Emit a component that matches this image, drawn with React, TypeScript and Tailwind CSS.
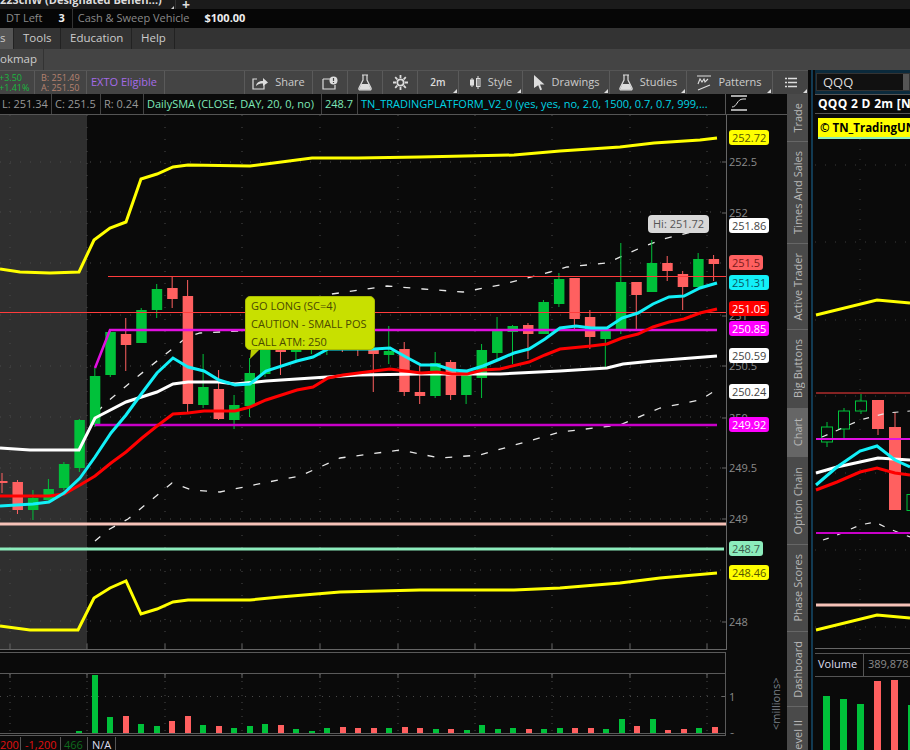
import React from 'react'

type Candle = [number, number, number, number, 'g' | 'r']

// [bodyTop, bodyBottom, wickTop, wickBottom, colour], index gives x
const candles: Candle[] = [
  [481, 483, 473, 493, 'r'], [482, 510, 480, 514, 'r'], [498, 510, 490, 520, 'g'], [489, 500, 479, 502, 'g'],
  [464, 488, 462, 490, 'g'], [420, 468, 419, 472, 'g'], [376, 425, 368, 427, 'g'], [332, 375, 330, 377, 'g'],
  [334, 345, 318, 371, 'r'], [310, 343, 308, 343, 'g'], [289, 310, 284, 318, 'g'], [288, 299, 277, 308, 'r'],
  [296, 404, 280, 412, 'r'], [387, 405, 354, 408, 'g'], [389, 419, 370, 420, 'r'], [405, 420, 395, 429, 'g'],
  [373, 406, 358, 417, 'g'], [348, 374, 345, 377, 'g'], [340, 352, 335, 375, 'r'], [340, 352, 335, 360, 'g'],
  [340, 350, 330, 354, 'g'], [340, 350, 335, 355, 'g'], [340, 350, 335, 352, 'r'], [340, 350, 335, 356, 'r'],
  [348, 354, 340, 392, 'r'], [351, 355, 326, 364, 'g'], [349, 392, 342, 396, 'r'], [392, 396, 364, 404, 'r'],
  [363, 396, 352, 398, 'g'], [362, 395, 360, 400, 'r'], [375, 395, 375, 404, 'g'], [350, 378, 344, 398, 'g'],
  [331, 353, 317, 359, 'g'], [326, 332, 325, 364, 'g'], [325, 334, 323, 359, 'r'], [302, 334, 300, 334, 'g'],
  [279, 304, 273, 307, 'g'], [278, 319, 278, 329, 'r'], [317, 337, 310, 349, 'r'], [330, 339, 330, 367, 'g'],
  [282, 330, 243, 334, 'g'], [282, 295, 282, 330, 'r'], [263, 292, 240, 292, 'g'], [263, 271, 256, 281, 'r'],
  [274, 287, 271, 310, 'r'], [259, 287, 253, 287, 'g'], [259, 264, 255, 281, 'r'],
]

const candleX = (i: number) => 2 + i * 15.47

const yellowTop = '0,269 20,272 50,273 79,272 94,240 110,228 126,222 141,179 157,174 173,167 188,165 250,166 266,164 312,158 358,158 420,157 514,155 560,151 620,147 654,143 700,140 717,138'
const yellowBottom = '0,626 30,630 78,630 94,598 110,588 126,581 141,614 157,609 173,602 188,600 250,600 280,597 340,592 420,590 514,590 560,588 620,583 660,578 717,573'
const white = '0,448 30,450 79,450 95,418 126,402 157,392 173,384 188,382 219,382 235,384 266,381 312,378 358,375 420,374 500,374 560,371 607,368 623,364 653,361 717,356'
const cyan = '0,506 33,504 49,502 64,493 80,478 95,457 111,433 126,415 142,393 157,373 173,358 188,367 204,371 219,380 235,385 250,384 266,371 297,361 313,357 328,349 374,349 390,348 406,357 421,365 437,365 452,370 467,371 483,366 500,359 514,353 529,349 545,339 560,328 576,326 591,328 607,328 622,318 638,313 653,304 669,297 684,296 700,288 717,283'
const red = '0,496 49,496 64,494 80,485 95,476 111,463 126,452 142,438 157,426 173,414 188,413 204,411 235,411 250,407 266,400 297,390 313,387 328,378 343,375 374,371 390,369 421,373 437,372 452,374 467,374 483,370 500,369 529,362 545,355 560,349 591,346 607,344 622,338 638,334 653,327 669,322 684,319 700,313 717,309'
const dashUpper = '97,412 107,402 137,377 187,337 200,333 240,331 332,294 387,286 423,289 463,292 500,285 550,272 567,267 607,263 640,248 663,239 717,226'
const dashLower = '95,541 108,530 128,519 172,483 192,490 220,492 263,483 300,476 340,458 400,450 440,458 480,455 560,432 620,425 660,408 700,400 713,392'

const gridX = [10, 87, 165, 242, 320, 398, 475, 552, 630, 707]
const gridY = [162, 212, 263, 315, 366, 417, 468, 519, 570, 621]
const axisLabels: [string, number][] = [['252.5', 162], ['252', 213], ['251', 316], ['250.5', 366], ['250', 418], ['249.5', 468], ['249', 519], ['248', 622]]

const volumes: [number, number, 'g' | 'r'][] = [
  [79, 731, 'g'], [95, 675, 'g'], [110, 717, 'g'], [126, 716, 'r'], [141, 724, 'g'], [157, 726, 'g'], [172, 721, 'r'],
  [188, 716, 'r'], [203, 725, 'g'], [219, 726, 'r'], [234, 728, 'g'], [250, 726, 'g'], [265, 724, 'g'], [281, 725, 'r'],
  [296, 729, 'g'], [312, 731, 'g'], [327, 728, 'g'], [343, 727, 'r'], [358, 728, 'r'], [374, 728, 'r'], [389, 728, 'g'],
  [405, 727, 'r'], [420, 728, 'r'], [436, 729, 'g'], [451, 729, 'r'], [467, 730, 'g'], [482, 725, 'g'], [498, 729, 'g'],
  [513, 728, 'g'], [529, 729, 'r'], [544, 729, 'g'], [560, 728, 'g'], [575, 728, 'r'], [591, 728, 'r'], [606, 729, 'g'],
  [622, 719, 'g'], [637, 726, 'r'], [653, 719, 'g'], [668, 730, 'r'], [684, 729, 'r'], [699, 728, 'g'], [715, 727, 'r'],
]

const GREEN = '#00c13a'
const RED = '#ff6060'

const Corner = () => (
  <span className="absolute right-px bottom-px w-0 h-0 border-l-[4px] border-l-transparent border-b-[4px] border-b-[#ddd]" />
)

const FlaskIcon = () => (
  <svg width="14" height="17" viewBox="0 0 14 17" fill="none">
    <path d="M4 1h6M5 1v5L1 14c-.5 1 .2 2 1 2h10c.8 0 1.5-1 1-2L9 6V1" stroke="#ddd" strokeWidth="1.2" />
    <path d="M3.4 10h7.2l2 4.5c.2.7-.2 1.3-.8 1.3H2.2c-.6 0-1-.6-.8-1.3z" fill="#ddd" />
  </svg>
)

const ToolCell = ({ w, corner, children }: { w: string; corner?: boolean; children: React.ReactNode }) => (
  <div className={`${w} relative h-full shrink-0 flex items-center justify-center gap-[7px] border-r border-[#5a5a5a] text-[#ccc]`}>
    {children}
    {corner && <Corner />}
  </div>
)

const Toolbar = () => (
  <div className="h-[24px] flex items-stretch bg-[#444] border-t border-[#555] text-[11px]">
    <div className="w-[35px] shrink-0 border-r border-[#5a5a5a] flex flex-col justify-center text-[9px] leading-[10px] text-[#19b83f] overflow-hidden">
      <span className="-ml-[1px]">+3.50</span>
      <span className="-ml-[1px]">+1.41%</span>
    </div>
    <div className="w-[52px] shrink-0 border-r border-[#5a5a5a] flex flex-col justify-center pl-[6px] text-[9px] leading-[10px] text-[#b5826f]">
      <span>B: 251.49</span>
      <span>A: 251.50</span>
    </div>
    <div className="w-[78px] shrink-0 border-r border-[#5a5a5a] pl-[4px] flex items-center text-[#a46be8] whitespace-nowrap">EXTO Eligible</div>
    <div className="w-[80px] shrink-0 border-r border-[#5a5a5a]" />
    <ToolCell w="w-[68px]">
      <svg width="16" height="14" viewBox="0 0 16 14" fill="none">
        <path d="M5 3H1v10h11V8" stroke="#ddd" strokeWidth="1.2" />
        <path d="M4 10c.5-3.5 3-5 7-5V2l5 4.5L11 10V7.5c-3 0-5 .5-7 2.5z" fill="#ddd" />
      </svg>
      <span>Share</span>
    </ToolCell>
    <ToolCell w="w-[35px]">
      <svg width="16" height="14" viewBox="0 0 16 14" fill="none">
        <path d="M1 3h8M1 3v10h12V9" stroke="#ddd" strokeWidth="1.2" />
        <circle cx="11.5" cy="4.5" r="4" fill="#ddd" />
        <path d="M11.5 2v3M11.5 6v1" stroke="#444" strokeWidth="1.2" />
      </svg>
    </ToolCell>
    <ToolCell w="w-[35px]"><FlaskIcon /></ToolCell>
    <ToolCell w="w-[35px]">
      <svg width="15" height="15" viewBox="0 0 15 15" fill="none">
        <circle cx="7.5" cy="7.5" r="3.2" stroke="#ddd" strokeWidth="1.8" />
        <path d="M7.5 0v3M7.5 12v3M0 7.5h3M12 7.5h3M2.2 2.2l2.1 2.1M10.7 10.7l2.1 2.1M12.8 2.2l-2.1 2.1M4.3 10.7l-2.1 2.1" stroke="#ddd" strokeWidth="1.8" />
      </svg>
    </ToolCell>
    <ToolCell w="w-[41px]" corner><span className="font-semibold text-[10px] text-[#ddd]">2m</span></ToolCell>
    <ToolCell w="w-[64px]" corner>
      <svg width="12" height="15" viewBox="0 0 12 15" fill="none">
        <path d="M3 3v9M9 1v13" stroke="#ddd" strokeWidth="1" />
        <rect x="1" y="4.5" width="4" height="6" fill="#ddd" />
        <rect x="7.5" y="3.5" width="3.5" height="8" stroke="#ddd" />
      </svg>
      <span>Style</span>
    </ToolCell>
    <ToolCell w="w-[87px]" corner>
      <svg width="12" height="16" viewBox="0 0 12 16"><path d="M1 0l10.5 9.5H7l2 5-1.8.8-2-5L1 13z" fill="#ddd" /></svg>
      <span>Drawings</span>
    </ToolCell>
    <ToolCell w="w-[77px]" corner><FlaskIcon /><span>Studies</span></ToolCell>
    <ToolCell w="w-[86px]" corner>
      <svg width="14" height="16" viewBox="0 0 14 16" fill="none">
        <path d="M0 1h14M1 15l12-5M1 9l2-5 2 3 2-3 1 3 3-3" stroke="#ddd" strokeWidth="1.1" />
      </svg>
      <span>Patterns</span>
    </ToolCell>
    <div className="relative flex-1 flex items-center justify-center">
      <svg width="12" height="11" viewBox="0 0 12 11" fill="none">
        <path d="M3 1.5h9M3 5.5h9M3 9.5h9M0 1.5h2M0 5.5h2M0 9.5h2" stroke="#ddd" strokeWidth="1.5" />
      </svg>
      <Corner />
    </div>
  </div>
)

const StudyRow = () => (
  <div className="h-[21px] flex bg-[#0a0a0a] border-b border-[#555] text-[11px] leading-[20px] whitespace-nowrap">
    <div className="w-[726px] shrink-0 flex overflow-hidden border-r border-[#555]">
      <span className="w-[52px] pl-[2px] text-[#999] border-r border-[#444]">L: 251.34</span>
      <span className="w-[49px] pl-[3px] text-[#999] border-r border-[#444]">C: 251.5</span>
      <span className="w-[43px] pl-[3px] text-[#999] border-r border-[#444]">R: 0.24</span>
      <span className="w-[178px] pl-[3px] text-[#7ee8b8] border-r border-[#444]">DailySMA (CLOSE, DAY, 20, 0, no)</span>
      <span className="w-[36px] pl-[3px] text-[#7ee8b8] border-r border-[#444]">248.7</span>
      <span className="pl-[3px] text-[#00d4e4]">TN_TRADINGPLATFORM_V2_0 (yes, yes, no, 2.0, 1500, 0.7, 0.7, 999,...</span>
    </div>
    <div className="flex-1 pl-[5px] pt-[1px]">
      <svg width="16" height="16" viewBox="0 0 16 16" fill="none">
        <path d="M0 1h16M0 15h16" stroke="#ddd" strokeWidth="1.3" />
        <path d="M1 12c5 0 5-8 11-8h3" stroke="#ddd" strokeWidth="1" />
      </svg>
    </div>
  </div>
)

const tagBase = 'absolute left-[729px] h-[15px] rounded-[3px] px-[3px] text-[11px] leading-[15px] whitespace-nowrap'

const MainChart = () => (
  <div className="relative h-[535px] overflow-hidden bg-[#0a0a0a]">
    <svg className="absolute inset-0 block" width="787" height="535" viewBox="0 115 787 535" fontFamily="Open Sans, sans-serif">
      <rect x="0" y="115" width="87" height="534" fill="#2f2f2f" />
      {gridX.map(x => <line key={x} x1={x} x2={x} y1="115" y2="649" stroke="#4a4a4a" strokeDasharray="1 11" />)}
      {gridY.map(y => <line key={y} x1="0" x2="726" y1={y} y2={y} stroke="#4a4a4a" strokeDasharray="1 9" />)}
      {gridX.map(x => <line key={x} x1={x} x2={x} y1="644" y2="649" stroke="#666" />)}
      <line x1="0" x2="726" y1="524" y2="524" stroke="#f6c2b8" strokeWidth="3" />
      <line x1="0" x2="724" y1="549" y2="549" stroke="#8cecbc" strokeWidth="3" />
      <polyline points={yellowTop} fill="none" stroke="#ffff00" strokeWidth="3" />
      <polyline points={yellowBottom} fill="none" stroke="#ffff00" strokeWidth="3" />
      <polyline points={dashUpper} fill="none" stroke="#e8e8e8" strokeWidth="1.3" strokeDasharray="7 11" />
      <polyline points={dashLower} fill="none" stroke="#e8e8e8" strokeWidth="1.3" strokeDasharray="7 11" />
      {candles.map(([top, bottom, wickTop, wickBottom, c], i) => {
        const x = candleX(i)
        const fill = c === 'g' ? GREEN : RED
        return (
          <g key={i}>
            <line x1={x} x2={x} y1={wickTop} y2={wickBottom} stroke={fill} strokeWidth="1" />
            <rect x={x - 5} y={top} width="10.5" height={bottom - top} fill={fill} />
          </g>
        )
      })}
      <line x1="108" x2="726" y1="276.5" y2="276.5" stroke="#ff3c3c" />
      <line x1="0" x2="726" y1="312.5" y2="312.5" stroke="#ff3c3c" />
      <polyline points="95,368 110,330 717,330" fill="none" stroke="#e010e0" strokeWidth="2.5" />
      <line x1="95" x2="717" y1="425" y2="425" stroke="#c800c8" strokeWidth="2.5" />
      <polyline points={white} fill="none" stroke="#ffffff" strokeWidth="3" />
      <polyline points={red} fill="none" stroke="#ff0000" strokeWidth="3" />
      <polyline points={cyan} fill="none" stroke="#12f0f8" strokeWidth="3" />
      <line x1="726.5" x2="726.5" y1="115" y2="650" stroke="#666" />
      <line x1="0" x2="726" y1="649.5" y2="649.5" stroke="#666" />
      {axisLabels.map(([t, y]) => (
        <g key={t}>
          <line x1="722" x2="726" y1={y} y2={y} stroke="#666" />
          <text x="729" y={y + 4} fontSize="11" fill="#8a8a8a">{t}</text>
        </g>
      ))}
      <path d="M251 350h8l-9 9z" fill="#b8cc00" />
    </svg>

    <div className="absolute left-[245px] top-[181px] w-[130px] h-[54px] rounded-[5px] bg-[#c8e000] border border-[#a9bc00] pl-[5px] text-[11px] leading-[18px] text-[#4a4a00] whitespace-nowrap">
      <div>GO LONG (SC=4)</div>
      <div>CAUTION - SMALL POS</div>
      <div>CALL ATM: 250</div>
    </div>

    <div className="absolute left-[648px] top-[100px] w-[61px] h-[18px] rounded-[4px] bg-[#d8d8d8] text-center text-[11px] leading-[18px] text-[#555] whitespace-nowrap">Hi: 251.72</div>

    <div className={`${tagBase} top-[15px] bg-[#ffff00] text-[#555500]`}>252.72</div>
    <div className={`${tagBase} top-[103px] bg-white text-[#444]`}>251.86</div>
    <div className={`${tagBase} top-[140px] bg-[#ff6060] text-[#7a1a1a]`}>251.5</div>
    <div className={`${tagBase} top-[160px] bg-[#12f0f8] text-[#0a5560]`}>251.31</div>
    <div className={`${tagBase} top-[186px] bg-[#ff0000] text-white`}>251.05</div>
    <div className={`${tagBase} top-[206px] bg-[#ff00ff] text-white`}>250.85</div>
    <div className={`${tagBase} top-[233px] bg-white text-[#444]`}>250.59</div>
    <div className={`${tagBase} top-[269px] bg-white text-[#444]`}>250.24</div>
    <div className={`${tagBase} top-[302px] bg-[#ff00ff] text-white`}>249.92</div>
    <div className={`${tagBase} top-[426px] bg-[#8cecbc] text-[#3a5a4a]`}>248.7</div>
    <div className={`${tagBase} top-[450px] bg-[#ffff00] text-[#555500]`}>248.46</div>
  </div>
)

const VolumePanel = () => (
  <svg className="block" width="787" height="87" viewBox="0 650 787 87" fontFamily="Open Sans, sans-serif">
    <rect x="0" y="650" width="787" height="87" fill="#0a0a0a" />
    {gridX.map(x => <line key={x} x1={x} x2={x} y1="674" y2="733" stroke="#4a4a4a" strokeDasharray="1 6" />)}
    {gridX.map(x => <line key={x} x1={x} x2={x} y1="674" y2="678" stroke="#666" />)}
    <line x1="0" x2="726" y1="696.5" y2="696.5" stroke="#4a4a4a" strokeDasharray="1 6" />
    {volumes.map(([x, top, c]) => (
      <rect key={x} x={x - 3} y={top} width="6" height={733 - top} fill={c === 'g' ? GREEN : RED} />
    ))}
    <line x1="722" x2="726" y1="696.5" y2="696.5" stroke="#666" />
    <text x="729" y="701" fontSize="11" fill="#8a8a8a">1</text>
    <text x="729" y="741" fontSize="11" fill="#8a8a8a">0</text>
    <rect x="0" y="734" width="787" height="3" fill="#0a0a0a" />
    <path d="M0 652.5H726M0 673.5H726M0 733.5H726M0 735.5H726M725.5 652V736" stroke="#5a5a5a" fill="none" />
    <text transform="translate(780 730) rotate(-90)" fontSize="11" fill="#7a8088">{'<millions>'}</text>
  </svg>
)

const BottomRow = () => (
  <div className="h-[13px] flex bg-[#0a0a0a] text-[11px] leading-[15px] overflow-hidden whitespace-nowrap">
    <span className="w-[21px] text-[#e01010] border-r border-[#555] overflow-hidden text-right pr-[5px]">200</span>
    <span className="w-[40px] pl-[4px] text-[#e01010] border-r border-[#555]">-1,200</span>
    <span className="w-[27px] pl-[3px] text-[#0f6a1e] border-r border-[#555]">466</span>
    <span className="w-[28px] pl-[4px] text-[#dde] border-r border-[#555]">N/A</span>
  </div>
)

const sideTabs: [string, string, boolean][] = [
  ['Trade', 'h-[48px]', false],
  ['Times And Sales', 'h-[102px]', false],
  ['Active Trader', 'h-[86px]', false],
  ['Big Buttons', 'h-[79px]', false],
  ['Chart', 'h-[48px]', true],
  ['Option Chain', 'h-[88px]', false],
  ['Phase Scores', 'h-[87px]', false],
  ['Dashboard', 'h-[75px]', false],
  ['Level II', 'h-[62px]', false],
]

const SideTabs = () => (
  <div className="w-[21px] shrink-0 flex flex-col overflow-hidden bg-[#0a0a0a]">
    {sideTabs.map(([label, h, active]) => (
      <div
        key={label}
        className={`${h} shrink-0 flex items-center justify-center border-b border-[#666] text-[11px] leading-none text-[#b8b8b8] ${active ? 'bg-[#666]' : 'bg-[#4a4a4a]'}`}
      >
        <span className="[writing-mode:vertical-rl] rotate-180 whitespace-nowrap">{label}</span>
      </div>
    ))}
  </div>
)

const HollowCandle = ({ x, y, h, top, bottom }: { x: number; y: number; h: number; top: number; bottom: number }) => (
  <g stroke={GREEN} fill="none">
    <line x1={x} x2={x} y1={top} y2={y} />
    <line x1={x} x2={x} y1={y + h} y2={bottom} />
    <rect x={x - 5.5} y={y} width="11" height={h} />
  </g>
)

const RightPanel = () => (
  <div className="flex-1 min-w-0 flex flex-col overflow-hidden">
    <div className="h-[24px] shrink-0 bg-[#0b2a3c] py-[3px] pl-[1px]">
      <div className="h-[18px] bg-[#111] border border-[#333] pl-[6px] text-[13px] leading-[16px] text-[#ddd] flex justify-between">
        <span>QQQ</span>
        <span className="w-[6px] bg-[#555]" />
      </div>
    </div>
    <div className="h-[20px] shrink-0 bg-[#0a0a0a] border-y border-[#555] pl-[3px] text-[12px] tracking-[0.3px] leading-[18px] font-bold text-white whitespace-nowrap overflow-hidden">QQQ 2 D 2m [NA</div>
    <div className="h-[25px] shrink-0 bg-[#0a0a0a] pt-[4px] pl-[3px] overflow-hidden">
      <div className="h-[21px] bg-[#ffff00] border-b-[2px] border-[#8cecbc] pl-[2px] text-[11.5px] leading-[19px] font-bold text-black whitespace-nowrap">© TN_TradingUN</div>
    </div>
    <svg className="block shrink-0" width="95" height="511" viewBox="815 139 95 511">
      <rect x="815" y="139" width="95" height="511" fill="#0a0a0a" />
      {[165, 242, 320, 396, 473, 550, 627].map(y => <line key={y} x1="815" x2="910" y1={y} y2={y} stroke="#3a3a3a" strokeDasharray="1 9" />)}
      <line x1="860" x2="860" y1="139" y2="648" stroke="#3a3a3a" strokeDasharray="1 9" />
      <polyline points="816,315 877,300 910,303" fill="none" stroke="#ffff00" strokeWidth="3" />
      <line x1="816" x2="910" y1="393" y2="393" stroke="#ff3c3c" />
      <HollowCandle x={827} y={427} h={15} top={422} bottom={447} />
      <HollowCandle x={844} y={411} h={18} top={408} bottom={439} />
      <HollowCandle x={861} y={401} h={10} top={394} bottom={414} />
      <line x1="878" x2="878" y1="429" y2="435" stroke={RED} />
      <rect x="872" y="400" width="12" height="29" fill={RED} />
      <line x1="895" x2="895" y1="412" y2="427" stroke={RED} />
      <rect x="889" y="427" width="12" height="83" fill={RED} />
      <rect x="907" y="494.5" width="6" height="16" stroke={GREEN} fill="none" />
      <polyline points="822,437 838,430 860,420 887,413 910,411" fill="none" stroke="#e8e8e8" strokeWidth="1.2" strokeDasharray="6 9" />
      <polyline points="823,540 835,536 860,525 875,522 887,528 910,537" fill="none" stroke="#e8e8e8" strokeWidth="1.2" strokeDasharray="6 9" />
      <line x1="816" x2="910" y1="439" y2="439" stroke="#e010e0" strokeWidth="2" />
      <line x1="816" x2="910" y1="533" y2="533" stroke="#c800c8" strokeWidth="2" />
      <polyline points="816,473 837,467 860,462 878,458 910,460" fill="none" stroke="#ffffff" strokeWidth="3" />
      <polyline points="816,490 837,482 860,472 877,468 895,473 910,475" fill="none" stroke="#ff0000" strokeWidth="3" />
      <polyline points="816,485 837,467 860,451 877,446 895,460 910,467" fill="none" stroke="#12f0f8" strokeWidth="3" />
      <line x1="816" x2="910" y1="605" y2="605" stroke="#f6c2b8" strokeWidth="3" />
      <polyline points="816,630 877,615 910,618" fill="none" stroke="#ffff00" strokeWidth="3" />
      <line x1="815" x2="910" y1="648.5" y2="648.5" stroke="#666" />
    </svg>
    <div className="h-[24px] shrink-0 bg-[#0a0a0a] border-y border-[#555] mt-[3px] flex text-[11px] leading-[20px] whitespace-nowrap">
      <span className="w-[49px] shrink-0 pl-[3px] text-[#dde] border-r border-[#555]">Volume</span>
      <span className="pl-[4px] text-[#8a8a8a]">389,878</span>
    </div>
    <svg className="block shrink-0" width="95" height="80" viewBox="815 673 95 80">
      <rect x="815" y="673" width="95" height="80" fill="#0a0a0a" />
      <rect x="823" y="692" width="7" height="60" fill={GREEN} />
      <rect x="840" y="695" width="7" height="60" fill={GREEN} />
      <rect x="857" y="700" width="7" height="60" fill={GREEN} />
      <rect x="874" y="677" width="7" height="80" fill={RED} />
      <rect x="891" y="676" width="7" height="80" fill={RED} />
      <rect x="908" y="701" width="7" height="60" fill={GREEN} />
    </svg>
  </div>
)

const App: React.FC = () => {
  return (
    <div className="w-[910px] h-[750px] overflow-hidden flex flex-col bg-[#0a0a0a] font-['Open_Sans',sans-serif]">
      {/* Window tab strip, cut off at the top */}
      <div className="h-[9px] shrink-0 flex items-end bg-[#1b1b1b] overflow-hidden">
        <div className="relative w-[176px] h-[9px] shrink-0 overflow-hidden border-r border-[#333]">
          <span className="absolute left-0 bottom-[1px] text-[11px] leading-[16px] font-bold text-[#ddd] whitespace-nowrap">22SchW (Designated Benefi...)</span>
          <span className="absolute right-[1px] bottom-0 w-0 h-0 border-l-[3px] border-l-transparent border-b-[3px] border-b-[#ccc]" />
        </div>
        <span className="ml-[6px] text-[14px] leading-[9px] font-bold text-[#ddd]">+</span>
      </div>

      {/* Account strip */}
      <div className="h-[19px] shrink-0 flex items-center bg-[#060606] text-[11px] whitespace-nowrap">
        <span className="ml-[6px] text-[#8a8a8a]">DT Left</span>
        <span className="ml-[16px] font-bold text-[#eee]">3</span>
        <span className="ml-[7px] mr-[8px] h-full border-l border-[#333]" />
        <span className="-ml-[3px] text-[#8a8a8a]">Cash &amp; Sweep Vehicle</span>
        <span className="ml-[15px] font-bold text-[#eee]">$100.00</span>
      </div>

      {/* Main menu */}
      <div className="h-[21px] shrink-0 flex bg-[#333] text-[11.5px] leading-[20px] text-[#ccc]">
        <span className="w-[14px] bg-[#555] border-r border-[#222] overflow-hidden">s</span>
        <span className="w-[47px] pl-[9px] border-r border-[#222]">Tools</span>
        <span className="w-[71px] pl-[9px] border-r border-[#222]">Education</span>
        <span className="w-[43px] pl-[9px] border-r border-[#222]">Help</span>
      </div>

      {/* Sub tabs */}
      <div className="h-[21px] shrink-0 flex bg-[#444] text-[11.5px] leading-[20px] text-[#ccc]">
        <span className="w-[44px] border-r border-[#333] overflow-hidden">okmap</span>
      </div>

      <div className="flex-1 min-h-0 flex">
        <div className="w-[808px] shrink-0 flex flex-col">
          <Toolbar />
          <div className="flex-1 min-h-0 flex">
            <div className="w-[787px] shrink-0 flex flex-col">
              <StudyRow />
              <MainChart />
              <VolumePanel />
              <BottomRow />
            </div>
            <SideTabs />
          </div>
        </div>
        {/* Gap between the two chart grids */}
        <div className="w-[7px] shrink-0 flex justify-center bg-[#0a0a0a]">
          <div className="w-[2px] bg-[#123a52]" />
        </div>
        <RightPanel />
      </div>
    </div>
  )
}

export default App
